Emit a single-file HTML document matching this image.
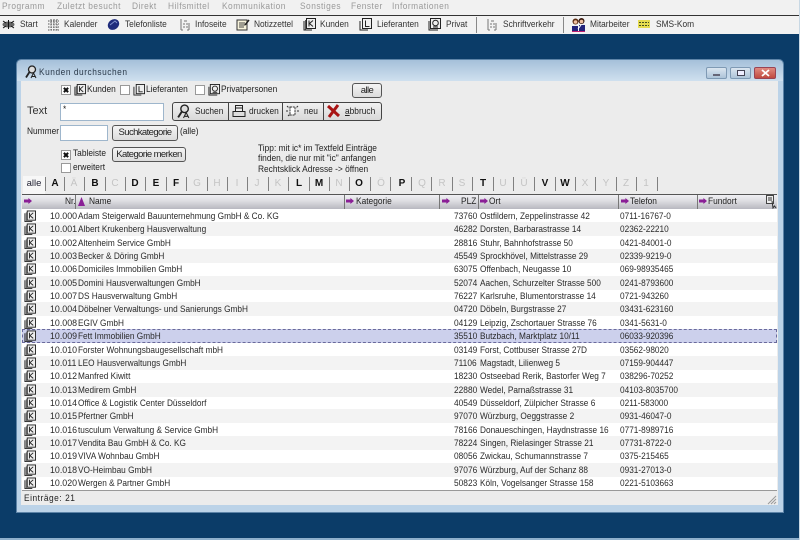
<!DOCTYPE html>
<html lang="de">
<head>
<meta charset="utf-8">
<title>Kunden durchsuchen</title>
<style>
html,body{margin:0;padding:0}
body{width:800px;height:540px;overflow:hidden;background:#0b3c68;position:relative;font-family:"Liberation Sans",sans-serif;font-size:9.5px;color:#222;filter:blur(.35px)}
div,span,svg{position:absolute}
.t{white-space:nowrap;line-height:12px;transform:scaleX(.88);transform-origin:left center}
#menu{left:0;top:0;width:800px;height:15px;background:#f1f1f1;border-bottom:1px solid #333}
#menu span{top:1px;color:#9a9a9a;font-size:9.5px;letter-spacing:.55px;white-space:nowrap;line-height:12px;transform:scaleX(.88);transform-origin:left center}
#bar{left:0;top:16px;width:800px;height:18px;background:#f2f2f2}
#bar span{top:3px;white-space:nowrap;line-height:12px;color:#333;transform:scaleX(.88);transform-origin:left center}
#bar svg{top:2px}
.sep{top:1px;width:1px;height:16px;background:#888}
#win{left:17px;top:60px;width:766px;height:452px;border-radius:4px 4px 0 0;background:linear-gradient(#a5c0da,#cfe0ef 21px,#bcd3e8 21px,#bcd3e8);box-shadow:0 0 0 1px #5d84a8}
#body{left:4px;top:21px;width:757px;height:424px;background:#ececec}
.btn{background:linear-gradient(#f4f4f4,#dcdcdc);border:1px solid #555;border-radius:3px;text-align:center;white-space:nowrap;color:#222;box-sizing:border-box;letter-spacing:-.6px}
.cb{width:10px;height:10px;background:#fff;border:1px solid #999;box-sizing:border-box}
.cb.on::after{content:"";position:absolute;left:1px;top:3px;width:6px;height:2px;background:#111;transform:rotate(45deg)}
.cb.on::before{content:"";position:absolute;left:1px;top:3px;width:6px;height:2px;background:#111;transform:rotate(-45deg)}
.in{background:#fff;border:1px solid #9eb6cc;box-sizing:border-box}
.l{top:177px;width:20px;text-align:center;font-size:10px;line-height:13px;color:#c4c4c4}
.l.b{font-weight:bold;color:#111}
.s{top:177px;width:1px;height:14px;background:#808080}
#head{left:22px;top:194px;width:755px;height:15px;background:linear-gradient(#f0f0f4,#dcdce0 45%,#b8b8c0);border-top:1px solid #555;box-sizing:border-box}
#head i{position:absolute;top:0;width:1px;height:14px;background:#777}
.ar{position:absolute;width:8px;height:6px;background:#8a1f96;top:3px;clip-path:polygon(0 25%,55% 25%,55% 0,100% 50%,55% 100%,55% 75%,0 75%)}
#head span{top:1px;white-space:nowrap;line-height:12px;color:#222;transform:scaleX(.88);transform-origin:left center}
#rows{left:22px;top:209px;width:755px;height:282px;background:#fff;border-bottom:1px solid #999;box-sizing:border-box;overflow:hidden}
.r{left:0;width:755px;height:14px;line-height:14px;white-space:nowrap;color:#2a2a2a}
.r:nth-child(even){background:#f3f3f3}
.r b{font-weight:normal;position:absolute;top:1px;transform:scaleX(.87);transform-origin:left center}
.r .n{left:28px;transform:scaleX(.93)}
.r .a{left:56px}
.r .p{left:431.5px;transform:scaleX(.88)}
.r .o{left:458px}
.r .f{left:598px}
.r svg{left:2px;top:1px}
.sel{background:#ccd0ec!important;outline:1px dashed #6a6a9c;outline-offset:-1px}
</style>
</head>
<body>
<svg width="0" height="0" style="left:0;top:0"><defs>
<symbol id="k" viewBox="0 0 13 13"><rect x="3.500" y=".5" width="9" height="10" fill="#eee" stroke="#222"/><path d="M1 3v9h8" fill="none" stroke="#222"/><path d="M2.500 2v9.500" stroke="#555"/><path d="M6 2.500v6M10 2.500L6.500 5.500 10 8.500" fill="none" stroke="#222"/></symbol>
<symbol id="l" viewBox="0 0 13 13"><rect x="3.500" y=".5" width="9" height="10" fill="#eee" stroke="#222"/><path d="M1 3v9h8" fill="none" stroke="#222"/><path d="M6.500 2.500v6h4" fill="none" stroke="#222"/></symbol>
<symbol id="pv" viewBox="0 0 13 13"><rect x="2.500" y=".5" width="10" height="10" fill="#eee" stroke="#222"/><path d="M1 3v9h9" fill="none" stroke="#222"/><circle cx="7.500" cy="5" r="2.800" fill="none" stroke="#222"/><path d="M5 9h5" stroke="#222"/></symbol>
<symbol id="m" viewBox="0 0 14 14"><circle cx="8" cy="4.500" r="3.500" fill="#ddd" stroke="#222" stroke-width="1.300"/><path d="M5.500 7L2 12.500" stroke="#222" stroke-width="1.800"/><path d="M7 13l2.500-5L12 13M8 11.500h3" fill="none" stroke="#222"/></symbol>
</defs></svg>

<div id="menu">
<span style="left:2px">Programm</span><span style="left:57px">Zuletzt besucht</span><span style="left:132px">Direkt</span><span style="left:168px">Hilfsmittel</span><span style="left:222px">Kommunikation</span><span style="left:300px">Sonstiges</span><span style="left:351px">Fenster</span><span style="left:392px">Informationen</span>
</div>

<div id="bar">
<svg style="left:2px" width="13" height="13" viewBox="0 0 13 13"><ellipse cx="6.500" cy="6.500" rx="6" ry="3" fill="#666"/><path d="M1 3l3 2M12 3L9 5M1 10l3-2M12 10L9 8M6.500 2v9" stroke="#111"/></svg>
<span style="left:20px">Start</span>
<svg style="left:47px" width="13" height="13" viewBox="0 0 13 13"><path d="M1 3h11M1 6h11M1 9h11M1 12h11M4 1v12M7 1v12M10 1v12" stroke="#555" stroke-dasharray="1.500 1"/></svg>
<span style="left:64px">Kalender</span>
<svg style="left:107px" width="13" height="13" viewBox="0 0 13 13"><ellipse cx="6.500" cy="6.500" rx="6" ry="5" transform="rotate(-35 6.500 6.500)" fill="#1f2c7c"/><path d="M3 7l5-4 2 2" stroke="#7f90cd" fill="none"/></svg>
<span style="left:125px">Telefonliste</span>
<svg style="left:180px" width="10" height="13" viewBox="0 0 10 13"><path d="M1 1v11M9 12V5M4 3h3M3 6h2M6 6h2M3 9h2M6 9h2M1 12h2M7 12h2" fill="none" stroke="#777"/></svg>
<span style="left:195px">Infoseite</span>
<svg style="left:236px" width="14" height="13" viewBox="0 0 14 13"><rect x="1" y="2" width="10" height="10" fill="#f7f3dc" stroke="#333"/><path d="M3 5h6M3 7h6M3 9h5" stroke="#444"/><path d="M9 7l4-5" stroke="#222" stroke-width="1.500"/></svg>
<span style="left:254px">Notizzettel</span>
<svg style="left:303px" width="13" height="13"><use href="#k"/></svg>
<span style="left:320px">Kunden</span>
<svg style="left:359px" width="13" height="13"><use href="#l"/></svg>
<span style="left:377px">Lieferanten</span>
<svg style="left:428px" width="13" height="13"><use href="#pv"/></svg>
<span style="left:446px">Privat</span>
<div class="sep" style="left:476px"></div>
<svg style="left:487px" width="10" height="13" viewBox="0 0 10 13"><path d="M1 1v11M9 12V5M4 3h3M3 6h2M6 6h2M3 9h2M6 9h2M1 12h2M7 12h2" fill="none" stroke="#777"/></svg>
<span style="left:503px">Schriftverkehr</span>
<div class="sep" style="left:563px"></div>
<svg style="left:571px" width="15" height="14" viewBox="0 0 15 14"><circle cx="4.500" cy="3.500" r="3" fill="#5a2a10"/><circle cx="4.500" cy="4" r="1.800" fill="#f0c0a0"/><circle cx="10.500" cy="3" r="3" fill="#3a1a10"/><circle cx="10.500" cy="3.500" r="1.800" fill="#f0c0a0"/><path d="M1 13V8h6v5zM8 13V7h6v6z" fill="#22227a"/><path d="M1 13.500h13" stroke="#c02070"/><path d="M7 11l3-4" stroke="#fff"/></svg>
<span style="left:590px">Mitarbeiter</span>
<svg style="left:638px" width="12" height="12" viewBox="0 0 12 12"><rect y="2" width="12" height="8" fill="#e6dc50"/><path d="M1 4.500h10M1 7.500h10" stroke="#465020" stroke-dasharray="2 1"/></svg>
<span style="left:656px">SMS-Kom</span>
</div>

<div id="win"><div id="body"></div></div>

<!-- title -->
<svg style="left:24px;top:65px" width="14" height="14"><use href="#m"/></svg>
<span class="t" style="left:39px;top:67px;color:#2b3a4a;letter-spacing:.6px">Kunden durchsuchen</span>
<div style="left:706px;top:67px;width:21px;height:12px;border:1px solid #7f9ab4;box-sizing:border-box;border-radius:2px;background:linear-gradient(#dbe6f0,#adc4d9)"><div style="left:6px;top:6px;width:7px;height:2px;background:#fff;border:1px solid #667;box-sizing:border-box"></div></div>
<div style="left:730px;top:67px;width:21px;height:12px;border:1px solid #7f9ab4;box-sizing:border-box;border-radius:2px;background:linear-gradient(#dbe6f0,#adc4d9)"><div style="left:6px;top:2px;width:8px;height:6px;background:#eef;border:1px solid #445;box-sizing:border-box"></div></div>
<div style="left:754px;top:67px;width:22px;height:12px;border:1px solid #945;box-sizing:border-box;border-radius:2px;background:linear-gradient(#e08a80,#c04a40)"><svg style="left:6px;top:1px" width="9" height="8" viewBox="0 0 9 8"><path d="M1 1l7 6M8 1L1 7" stroke="#fff" stroke-width="1.800"/></svg></div>

<!-- form top row -->
<div class="cb on" style="left:61px;top:85px"></div>
<svg style="left:74px;top:84px" width="12" height="12"><use href="#k"/></svg>
<span class="t" style="left:87px;top:84px">Kunden</span>
<div class="cb" style="left:120px;top:85px"></div>
<svg style="left:133px;top:84px" width="12" height="12"><use href="#l"/></svg>
<span class="t" style="left:146px;top:84px">Lieferanten</span>
<div class="cb" style="left:195px;top:85px"></div>
<svg style="left:208px;top:84px" width="12" height="12"><use href="#pv"/></svg>
<span class="t" style="left:221px;top:84px">Privatpersonen</span>
<div class="btn" style="left:352px;top:83px;width:30px;height:15px;line-height:13px">alle</div>

<span class="t" style="left:27px;top:105px;font-size:11px;color:#333;transform:none">Text</span>
<div class="in" style="left:60px;top:103px;width:104px;height:18px"><span class="t" style="left:2px;top:0">*</span></div>

<div style="left:172px;top:102px;width:210px;height:19px;background:linear-gradient(#f0f0f0,#d8d8d8);border:1px solid #444;border-radius:3px;box-sizing:border-box"></div>
<div style="left:228px;top:102px;width:1px;height:19px;background:#444"></div>
<div style="left:282px;top:102px;width:1px;height:19px;background:#444"></div>
<div style="left:323px;top:102px;width:1px;height:19px;background:#444"></div>
<svg style="left:176px;top:104px" width="15" height="15"><use href="#m"/></svg>
<span class="t" style="left:195px;top:106px">Suchen</span>
<svg style="left:232px;top:104px" width="14" height="14" viewBox="0 0 14 14"><rect x="3.500" y="1.500" width="7" height="6" fill="#eee" stroke="#222"/><rect x="1" y="7.500" width="12" height="5" fill="#ddd" stroke="#222"/><path d="M4 4h6" stroke="#222"/></svg>
<span class="t" style="left:249px;top:106px">drucken</span>
<svg style="left:285px;top:104px" width="15" height="14" viewBox="0 0 15 14"><path d="M5 3h5v8H5zM1 7h2M12 7h2M2 2l2 2M13 2l-2 2M3 12l2-2" fill="#fff" stroke="#333" stroke-dasharray="2 .7"/></svg>
<span class="t" style="left:304px;top:106px">neu</span>
<svg style="left:326px;top:104px" width="15" height="14" viewBox="0 0 15 14"><path d="M2 2l11 10M12 1L3 13" stroke="#a81414" stroke-width="3"/></svg>
<span class="t" style="left:345px;top:106px"><u>a</u>bbruch</span>

<span class="t" style="left:27px;top:126px">Nummer</span>
<div class="in" style="left:60px;top:125px;width:48px;height:16px"></div>
<div class="btn" style="left:112px;top:125px;width:66px;height:16px;line-height:14px">Suchkategorie</div>
<span class="t" style="left:180px;top:126px">(alle)</span>

<div class="cb on" style="left:61px;top:150px"></div>
<span class="t" style="left:73px;top:148px">Tableiste</span>
<div class="btn" style="left:112px;top:147px;width:74px;height:15px;line-height:13px">Kategorie merken</div>
<div class="cb" style="left:61px;top:163px"></div>
<span class="t" style="left:73px;top:162px">erweitert</span>

<span class="t" style="left:258px;top:143px">Tipp: mit ic* im Textfeld Einträge</span>
<span class="t" style="left:258px;top:153px">finden, die nur mit "ic" anfangen</span>
<span class="t" style="left:258px;top:164px">Rechtsklick Adresse -&gt; öffnen</span>

<!-- letters -->
<div style="left:23px;top:176px;width:22px;height:18px;background:#f7f7f7"></div>
<span class="l" style="left:24px;color:#223;font-size:9.500px;width:20px">alle</span>
<span class="l b" style="left:45px">A</span><span class="l" style="left:64px">Ä</span><span class="l b" style="left:85px">B</span><span class="l" style="left:105px">C</span><span class="l b" style="left:125px">D</span><span class="l b" style="left:146px">E</span><span class="l b" style="left:166px">F</span><span class="l" style="left:187px">G</span><span class="l" style="left:207px">H</span><span class="l" style="left:227px">I</span><span class="l" style="left:247px">J</span><span class="l" style="left:268px">K</span><span class="l b" style="left:289px">L</span><span class="l b" style="left:309px">M</span><span class="l" style="left:329px">N</span><span class="l b" style="left:349px">O</span><span class="l" style="left:371px">Ö</span><span class="l b" style="left:392px">P</span><span class="l" style="left:412px">Q</span><span class="l" style="left:432px">R</span><span class="l" style="left:452px">S</span><span class="l b" style="left:473px">T</span><span class="l" style="left:493px">U</span><span class="l" style="left:514px">Ü</span><span class="l b" style="left:535px">V</span><span class="l b" style="left:555px">W</span><span class="l" style="left:575px">X</span><span class="l" style="left:596px">Y</span><span class="l" style="left:616px">Z</span><span class="l" style="left:636px">1</span>
<i class="s" style="left:45px;position:absolute"></i><i class="s" style="left:64px;position:absolute"></i><i class="s" style="left:84px;position:absolute"></i><i class="s" style="left:105px;position:absolute"></i><i class="s" style="left:125px;position:absolute"></i><i class="s" style="left:145px;position:absolute"></i><i class="s" style="left:166px;position:absolute"></i><i class="s" style="left:186px;position:absolute"></i><i class="s" style="left:207px;position:absolute"></i><i class="s" style="left:227px;position:absolute"></i><i class="s" style="left:247px;position:absolute"></i><i class="s" style="left:268px;position:absolute"></i><i class="s" style="left:288px;position:absolute"></i><i class="s" style="left:309px;position:absolute"></i><i class="s" style="left:329px;position:absolute"></i><i class="s" style="left:349px;position:absolute"></i><i class="s" style="left:370px;position:absolute"></i><i class="s" style="left:390px;position:absolute"></i><i class="s" style="left:411px;position:absolute"></i><i class="s" style="left:431px;position:absolute"></i><i class="s" style="left:452px;position:absolute"></i><i class="s" style="left:472px;position:absolute"></i><i class="s" style="left:493px;position:absolute"></i><i class="s" style="left:513px;position:absolute"></i><i class="s" style="left:534px;position:absolute"></i><i class="s" style="left:555px;position:absolute"></i><i class="s" style="left:575px;position:absolute"></i><i class="s" style="left:595px;position:absolute"></i><i class="s" style="left:616px;position:absolute"></i><i class="s" style="left:636px;position:absolute"></i><i class="s" style="left:657px;position:absolute"></i>

<!-- header -->
<div id="head">
<b class="ar" style="left:2px"></b>
<span style="left:43px">Nr.</span><i style="left:53px"></i>
<svg style="left:55px;top:1px" width="9" height="11" viewBox="0 0 9 11"><path d="M4.500 1L8 10H1z" fill="#8a1f96"/></svg>
<span style="left:67px">Name</span><i style="left:322px"></i>
<b class="ar" style="left:324px"></b><span style="left:334px">Kategorie</span><i style="left:417px"></i>
<b class="ar" style="left:420px"></b><span style="left:439px">PLZ</span><i style="left:456px"></i>
<b class="ar" style="left:458px"></b><span style="left:467px">Ort</span><i style="left:596px"></i>
<b class="ar" style="left:599px"></b><span style="left:608px">Telefon</span><i style="left:675px"></i>
<b class="ar" style="left:677px"></b><span style="left:686px">Fundort</span>
<svg style="left:744px;top:0" width="11" height="14" viewBox="0 0 11 14"><rect x=".5" y=".5" width="7" height="8" fill="#eee" stroke="#444"/><path d="M2 3h4M2 5h4M6 6l1 7 1.500-2L10 13" fill="none" stroke="#333"/></svg>
</div>

<!-- rows -->
<div id="rows">
<div class="r" style="top:0"><svg width="12" height="13"><use href="#k"/></svg><b class="n">10.000</b><b class="a">Adam Steigerwald Bauunternehmung GmbH &amp; Co. KG</b><b class="p">73760</b><b class="o">Ostfildern, Zeppelinstrasse 42</b><b class="f">0711-16767-0</b></div>
<div class="r" style="top:13.400px"><svg width="12" height="13"><use href="#k"/></svg><b class="n">10.001</b><b class="a">Albert Krukenberg Hausverwaltung</b><b class="p">46282</b><b class="o">Dorsten, Barbarastrasse 14</b><b class="f">02362-22210</b></div>
<div class="r" style="top:26.700px"><svg width="12" height="13"><use href="#k"/></svg><b class="n">10.002</b><b class="a">Altenheim Service GmbH</b><b class="p">28816</b><b class="o">Stuhr, Bahnhofstrasse 50</b><b class="f">0421-84001-0</b></div>
<div class="r" style="top:40px"><svg width="12" height="13"><use href="#k"/></svg><b class="n">10.003</b><b class="a">Becker &amp; Döring GmbH</b><b class="p">45549</b><b class="o">Sprockhövel, Mittelstrasse 29</b><b class="f">02339-9219-0</b></div>
<div class="r" style="top:53.400px"><svg width="12" height="13"><use href="#k"/></svg><b class="n">10.006</b><b class="a">Domiciles Immobilien GmbH</b><b class="p">63075</b><b class="o">Offenbach, Neugasse 10</b><b class="f">069-98935465</b></div>
<div class="r" style="top:66.700px"><svg width="12" height="13"><use href="#k"/></svg><b class="n">10.005</b><b class="a">Domini Hausverwaltungen GmbH</b><b class="p">52074</b><b class="o">Aachen, Schurzelter Strasse 500</b><b class="f">0241-8793600</b></div>
<div class="r" style="top:80px"><svg width="12" height="13"><use href="#k"/></svg><b class="n">10.007</b><b class="a">DS Hausverwaltung GmbH</b><b class="p">76227</b><b class="o">Karlsruhe, Blumentorstrasse 14</b><b class="f">0721-943260</b></div>
<div class="r" style="top:93.400px"><svg width="12" height="13"><use href="#k"/></svg><b class="n">10.004</b><b class="a">Döbelner Verwaltungs- und Sanierungs GmbH</b><b class="p">04720</b><b class="o">Döbeln, Burgstrasse 27</b><b class="f">03431-623160</b></div>
<div class="r" style="top:106.700px"><svg width="12" height="13"><use href="#k"/></svg><b class="n">10.008</b><b class="a">EGIV GmbH</b><b class="p">04129</b><b class="o">Leipzig, Zschortauer Strasse 76</b><b class="f">0341-5631-0</b></div>
<div class="r sel" style="top:120px"><svg width="12" height="13"><use href="#k"/></svg><b class="n">10.009</b><b class="a">Fett Immobilien GmbH</b><b class="p">35510</b><b class="o">Butzbach, Marktplatz 10/11</b><b class="f">06033-920396</b></div>
<div class="r" style="top:133.500px"><svg width="12" height="13"><use href="#k"/></svg><b class="n">10.010</b><b class="a">Forster Wohnungsbaugesellschaft mbH</b><b class="p">03149</b><b class="o">Forst, Cottbuser Strasse 27D</b><b class="f">03562-98020</b></div>
<div class="r" style="top:146.800px"><svg width="12" height="13"><use href="#k"/></svg><b class="n">10.011</b><b class="a">LEO Hausverwaltungs GmbH</b><b class="p">71106</b><b class="o">Magstadt, Lilienweg 5</b><b class="f">07159-904447</b></div>
<div class="r" style="top:160.200px"><svg width="12" height="13"><use href="#k"/></svg><b class="n">10.012</b><b class="a">Manfred Kiwitt</b><b class="p">18230</b><b class="o">Ostseebad Rerik, Bastorfer Weg 7</b><b class="f">038296-70252</b></div>
<div class="r" style="top:173.500px"><svg width="12" height="13"><use href="#k"/></svg><b class="n">10.013</b><b class="a">Medirem GmbH</b><b class="p">22880</b><b class="o">Wedel, Parnaßstrasse 31</b><b class="f">04103-8035700</b></div>
<div class="r" style="top:186.900px"><svg width="12" height="13"><use href="#k"/></svg><b class="n">10.014</b><b class="a">Office &amp; Logistik Center Düsseldorf</b><b class="p">40549</b><b class="o">Düsseldorf, Zülpicher Strasse 6</b><b class="f">0211-583000</b></div>
<div class="r" style="top:200.200px"><svg width="12" height="13"><use href="#k"/></svg><b class="n">10.015</b><b class="a">Pfertner GmbH</b><b class="p">97070</b><b class="o">Würzburg, Oeggstrasse 2</b><b class="f">0931-46047-0</b></div>
<div class="r" style="top:213.600px"><svg width="12" height="13"><use href="#k"/></svg><b class="n">10.016</b><b class="a">tusculum Verwaltung &amp; Service GmbH</b><b class="p">78166</b><b class="o">Donaueschingen, Haydnstrasse 16</b><b class="f">0771-8989716</b></div>
<div class="r" style="top:226.900px"><svg width="12" height="13"><use href="#k"/></svg><b class="n">10.017</b><b class="a">Vendita Bau GmbH &amp; Co. KG</b><b class="p">78224</b><b class="o">Singen, Rielasinger Strasse 21</b><b class="f">07731-8722-0</b></div>
<div class="r" style="top:240.300px"><svg width="12" height="13"><use href="#k"/></svg><b class="n">10.019</b><b class="a">VIVA Wohnbau GmbH</b><b class="p">08056</b><b class="o">Zwickau, Schumannstrasse 7</b><b class="f">0375-215465</b></div>
<div class="r" style="top:253.600px"><svg width="12" height="13"><use href="#k"/></svg><b class="n">10.018</b><b class="a">VO-Heimbau GmbH</b><b class="p">97076</b><b class="o">Würzburg, Auf der Schanz 88</b><b class="f">0931-27013-0</b></div>
<div class="r" style="top:267px"><svg width="12" height="13"><use href="#k"/></svg><b class="n">10.020</b><b class="a">Wergen &amp; Partner GmbH</b><b class="p">50823</b><b class="o">Köln, Vogelsanger Strasse 158</b><b class="f">0221-5103663</b></div>
</div>

<!-- status -->
<span class="t" style="left:24px;top:493px;letter-spacing:.6px">Einträge: 21</span>
<svg style="left:767px;top:495px" width="10" height="10" viewBox="0 0 10 10"><path d="M1 9l8-8M4 9l5-5M7 9l2-2" stroke="#999"/></svg>
<div style="left:0;top:538px;width:800px;height:2px;background:#8fb0cc"></div>
<div style="left:799px;top:0;width:1px;height:540px;background:#c8d8e4"></div>
</body>
</html>
